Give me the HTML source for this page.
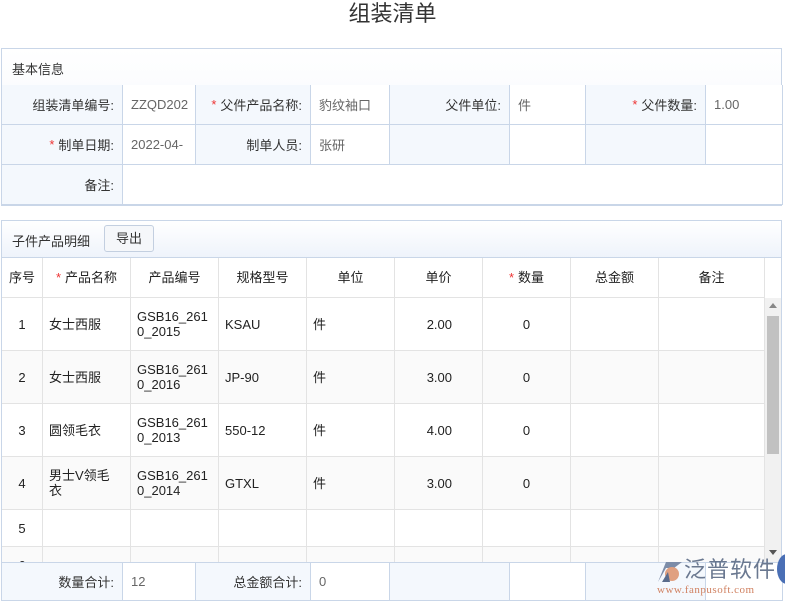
<!DOCTYPE html>
<html><head><meta charset="utf-8"><style>
*{margin:0;padding:0;box-sizing:border-box}
body{width:785px;height:603px;background:#fff;font-family:"Liberation Sans","Noto Sans CJK SC",sans-serif;font-size:13px;color:#333;position:relative;overflow:hidden}
.a{position:absolute}
.c{position:absolute;border-right:1px solid #c9d6e8;border-bottom:1px solid #c9d6e8;display:flex;align-items:center;padding:0 8px}
.l{background:#f4f8fd;justify-content:flex-end;color:#333}
.v{background:#fff;color:#666}
.s{color:#e33;margin-right:4px}
.g{position:absolute;border-right:1px solid #e3e3e3;border-bottom:1px solid #e3e3e3;display:flex;align-items:center;padding:0 6px;color:#222;line-height:15px}
.h{justify-content:center;background:#fff}
</style></head><body>
<div class="a" style="left:0;top:0;width:785px;text-align:center;font-size:22px;top:0;color:#333;line-height:28px">组装清单</div>

<div class="a" style="left:1px;top:48px;width:781px;height:158px;border:1px solid #c9d6e8;background:linear-gradient(#fff,#eef3fb)"></div>
<div class="a" style="left:12px;top:59px;font-size:13px">基本信息</div>
<div class="a" style="left:1px;top:85px;width:781px;height:121px;border-left:1px solid #c9d6e8">
<div class="c l" style="left:0;top:0;width:121px;height:40px">组装清单编号:</div>
<div class="c v" style="left:121px;top:0;width:73px;height:40px">ZZQD202</div>
<div class="c l" style="left:194px;top:0;width:115px;height:40px"><span class="s">*</span>父件产品名称:</div>
<div class="c v" style="left:309px;top:0;width:79px;height:40px">豹纹袖口</div>
<div class="c l" style="left:388px;top:0;width:120px;height:40px">父件单位:</div>
<div class="c v" style="left:508px;top:0;width:76px;height:40px">件</div>
<div class="c l" style="left:584px;top:0;width:120px;height:40px"><span class="s">*</span>父件数量:</div>
<div class="c v" style="left:704px;top:0;width:77px;height:40px">1.00</div>
<div class="c l" style="left:0;top:40px;width:121px;height:40px"><span class="s">*</span>制单日期:</div>
<div class="c v" style="left:121px;top:40px;width:73px;height:40px">2022-04-</div>
<div class="c l" style="left:194px;top:40px;width:115px;height:40px">制单人员:</div>
<div class="c v" style="left:309px;top:40px;width:79px;height:40px">张研</div>
<div class="c l" style="left:388px;top:40px;width:120px;height:40px"></div>
<div class="c v" style="left:508px;top:40px;width:76px;height:40px"></div>
<div class="c l" style="left:584px;top:40px;width:120px;height:40px"></div>
<div class="c v" style="left:704px;top:40px;width:77px;height:40px"></div>
<div class="c l" style="left:0;top:80px;width:121px;height:40px">备注:</div>
<div class="c v" style="left:121px;top:80px;width:660px;height:40px"></div>
</div>

<div class="a" style="left:1px;top:220px;width:781px;height:381px;border:1px solid #c9d6e8;background:linear-gradient(#fff,#eef3fb 37px,#fff 37px)"></div>
<div class="a" style="left:12px;top:231px">子件产品明细</div>
<div class="a" style="left:104px;top:225px;width:50px;height:27px;border:1px solid #c3cfe0;border-radius:3px;background:#f5f7fa;text-align:center;line-height:25px">导出</div>
<div class="a" style="left:2px;top:257px;width:779px;height:305px;overflow:hidden;border-top:1px solid #c9d6e8">
<div class="g h" style="left:0;top:0;width:41px;height:40px;padding:0">序号</div>
<div class="g h" style="left:41px;top:0;width:88px;height:40px"><span class="s">*</span>产品名称</div>
<div class="g h" style="left:129px;top:0;width:88px;height:40px">产品编号</div>
<div class="g h" style="left:217px;top:0;width:88px;height:40px">规格型号</div>
<div class="g h" style="left:305px;top:0;width:88px;height:40px">单位</div>
<div class="g h" style="left:393px;top:0;width:88px;height:40px">单价</div>
<div class="g h" style="left:481px;top:0;width:88px;height:40px"><span class="s">*</span>数量</div>
<div class="g h" style="left:569px;top:0;width:88px;height:40px">总金额</div>
<div class="g h" style="left:657px;top:0;width:106px;height:40px">备注</div>
<div id="rows"></div>
<div class="a" style="left:763px;top:40px;width:16px;height:265px;background:#f1f1f1"></div>
<div class="a" style="left:765px;top:58px;width:12px;height:138px;background:#c1c1c1"></div>
<div class="a" style="left:767px;top:45px;width:0;height:0;border-left:4px solid transparent;border-right:4px solid transparent;border-bottom:5px solid #888"></div>
<div class="a" style="left:767px;top:292px;width:0;height:0;border-left:4px solid transparent;border-right:4px solid transparent;border-top:5px solid #555"></div>
</div>
<script>
var d=[["1","女士西服","GSB16_2610_2015","KSAU","件","2.00","0"],["2","女士西服","GSB16_2610_2016","JP-90","件","3.00","0"],["3","圆领毛衣","GSB16_2610_2013","550-12","件","4.00","0"],["4","男士V领毛衣","GSB16_2610_2014","GTXL","件","3.00","0"],["5","","","","","",""],["6","","","","","",""]];
var L=[0,41,129,217,305,393,481,569,657],W=[41,88,88,88,88,88,88,88,106],h="",y=40;
d.forEach(function(r,i){var H=i<4?53:37;var bg=i%2==1?"#fafafa":"#fff";
for(var j=0;j<9;j++){var t=j<7?r[j]:"";var st="left:"+L[j]+"px;top:"+y+"px;width:"+W[j]+"px;height:"+H+"px;background:"+bg+";";
if(j==0)st+="justify-content:center;padding:0;";if(j==5)st+="justify-content:flex-end;padding-right:30px;";if(j==6)st+="justify-content:center;";
if(j==2&&t)t=t.slice(0,9)+"<br>"+t.slice(9);if(j==1&&t.length>5)t="男士V领毛<br>衣";
h+='<div class="g" style="'+st+'">'+t+'</div>';}
y+=H;});
document.getElementById("rows").innerHTML=h;
</script>
<div class="a" style="left:1px;top:562px;width:781px;height:39px;border-left:1px solid #c9d6e8;border-top:1px solid #c9d6e8">
<div class="c l" style="left:0;top:0;width:121px;height:38px">数量合计:</div>
<div class="c v" style="left:121px;top:0;width:73px;height:38px">12</div>
<div class="c l" style="left:194px;top:0;width:115px;height:38px">总金额合计:</div>
<div class="c v" style="left:309px;top:0;width:79px;height:38px">0</div>
<div class="c l" style="left:388px;top:0;width:120px;height:38px"></div>
<div class="c v" style="left:508px;top:0;width:76px;height:38px"></div>
<div class="c l" style="left:584px;top:0;width:120px;height:38px"></div>
<div class="c v" style="left:704px;top:0;width:77px;height:38px"></div>
</div>
<svg class="a" style="left:654px;top:558px" width="32" height="28" viewBox="0 0 32 28"><path d="M4 24 L12 4 L28 4 L20 10 L12 10 Z" fill="#7c8ca8"/><circle cx="18" cy="16" r="7" fill="#e0a080"/><path d="M8 24 L14 14 L16 24Z" fill="#5a6c8c"/></svg>
<div class="a" style="left:684px;top:557px;font-size:22px;color:#6a7890;line-height:26px;letter-spacing:1px">泛普软件</div>
<div class="a" style="left:657px;top:584px;font-size:11px;color:#d08060;font-family:'Liberation Serif',serif;letter-spacing:0.5px">www.fanpusoft.com</div>
<div class="a" style="left:777px;top:554px;width:20px;height:30px;border-radius:50%;background:#4a6fb5"></div>
</body></html>
